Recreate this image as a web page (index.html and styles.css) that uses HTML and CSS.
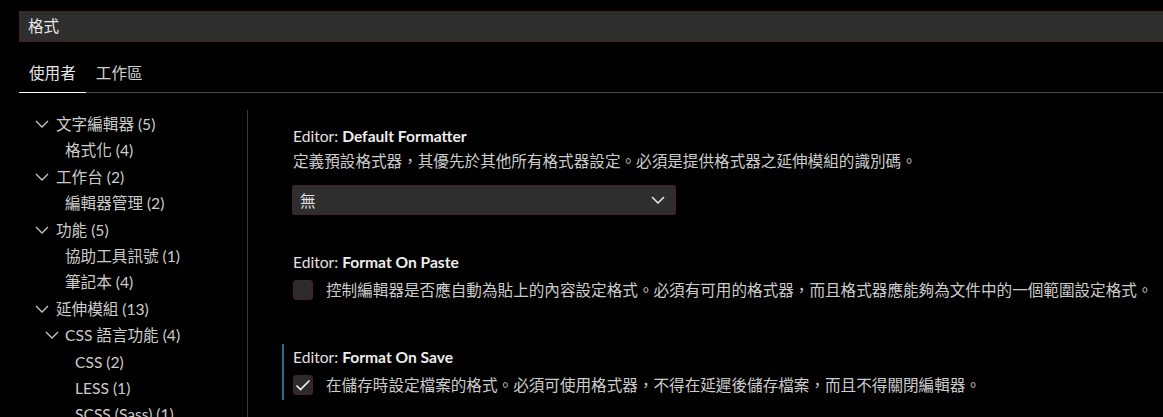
FILE: index.html
```html
<!DOCTYPE html>
<html lang="zh-Hant">
<head>
<meta charset="utf-8">
<link rel="stylesheet" href="styles.css">
</head>
<body>
<div class="page">
  <div class="header">
    <div class="search">格式</div>
    <div class="tabs">
      <div class="tab active">使用者</div>
      <div class="tab">工作區</div>
    </div>
  </div>
  <div class="body">
    <div class="tree">
      <div class="row l0"><svg class="chev" width="14" height="8" viewBox="0 0 14 8"><polyline points="1,1 7,7 13,1"/></svg>文字編輯器 (5)</div>
      <div class="row l1">格式化 (4)</div>
      <div class="row l0"><svg class="chev" width="14" height="8" viewBox="0 0 14 8"><polyline points="1,1 7,7 13,1"/></svg>工作台 (2)</div>
      <div class="row l1">編輯器管理 (2)</div>
      <div class="row l0"><svg class="chev" width="14" height="8" viewBox="0 0 14 8"><polyline points="1,1 7,7 13,1"/></svg>功能 (5)</div>
      <div class="row l1">協助工具訊號 (1)</div>
      <div class="row l1">筆記本 (4)</div>
      <div class="row l0"><svg class="chev" width="14" height="8" viewBox="0 0 14 8"><polyline points="1,1 7,7 13,1"/></svg>延伸模組 (13)</div>
      <div class="row l1p"><svg class="chev" width="14" height="8" viewBox="0 0 14 8"><polyline points="1,1 7,7 13,1"/></svg>CSS 語言功能 (4)</div>
      <div class="row l2">CSS (2)</div>
      <div class="row l2">LESS (1)</div>
      <div class="row l2">SCSS (Sass) (1)</div>
    </div>
    <div class="content">
      <div class="setting first">
        <div class="title">Editor: <b>Default Formatter</b></div>
        <div class="desc">定義預設格式器，其優先於其他所有格式器設定。必須是提供格式器之延伸模組的識別碼。</div>
        <div class="select"><span>無</span><svg class="selchev" width="14" height="8" viewBox="0 0 14 8"><polyline points="1,1 7,7 13,1"/></svg></div>
      </div>
      <div class="setting second">
        <div class="title">Editor: <b>Format On Paste</b></div>
        <div class="check-row"><span class="box"></span><span class="desc">控制編輯器是否應自動為貼上的內容設定格式。必須有可用的格式器，而且格式器應能夠為文件中的一個範圍設定格式。</span></div>
      </div>
      <div class="setting third focused">
        <div class="title">Editor: <b>Format On Save</b></div>
        <div class="check-row"><span class="box"><svg width="20" height="20" viewBox="0 0 20 20"><polyline points="3.5,10.5 7.5,14.5 16.5,5.5"/></svg></span><span class="desc">在儲存時設定檔案的格式。必須可使用格式器，不得在延遲後儲存檔案，而且不得關閉編輯器。</span></div>
      </div>
    </div>
  </div>
</div>
</body>
</html>
```

FILE: styles.css
```css
html, body {
  margin: 0;
  padding: 0;
  background: #000;
  overflow: hidden;
}
body {
  width: 1163px;
  height: 417px;
  font-family: "Segoe UI", Lato, "Noto Sans CJK TC", sans-serif;
  font-size: 15.6px;
  color: #cccccc;
}
.page {
  display: flex;
  flex-direction: column;
  height: 417px;
}
.header {
  padding: 11px 0 0 19px;
}
.search {
  box-sizing: border-box;
  height: 31px;
  margin-right: -30px;
  background: #2e2e2e;
  border: 1px solid #4f1f24;
  padding: 0 8px;
  line-height: 29px;
  color: #e6e6e6;
}
.tabs {
  display: flex;
  margin-top: 13px;
  border-bottom: 1px solid #4a4a4a;
  margin-right: -30px;
}
.tab {
  padding: 7px 10px 8px 10px;
  line-height: 22px;
  color: #d0d0d0;
}
.tab.active {
  color: #e8e8e8;
  box-shadow: inset 0 -1px 0 #ffffff;
  margin-bottom: -1px;
  padding-bottom: 9px;
}
.body {
  display: flex;
  margin-top: 17px;
  flex: 1;
}
.tree {
  width: 247px;
  flex: none;
  padding-top: 1px;
  border-right: 1px solid #3a3a3a;
}
.row {
  height: 26.4px;
  line-height: 26.4px;
  display: flex;
  align-items: center;
  white-space: nowrap;
  color: #cccccc;
}
.chev {
  flex: none;
  margin-right: 7px;
  fill: none;
  stroke: #c8c8c8;
  stroke-width: 1.3;
}
.l0 { padding-left: 35px; }
.l1 { padding-left: 65px; }
.l1p { padding-left: 45px; }
.l1p .chev { margin-right: 6px; }
.l2 { padding-left: 75px; }
.content {
  flex: 1;
  padding-top: 15px;
  padding-left: 34px;
}
.setting {
  border-left: 2px solid transparent;
  padding-left: 9px;
}
.setting.focused {
  border-left-color: #2f6b8c;
}
.title {
  line-height: 22px;
  color: #e2e2e2;
  white-space: nowrap;
}
.title b {
  font-weight: 700;
  color: #ededed;
}
.desc {
  line-height: 22px;
  color: #cccccc;
  white-space: nowrap;
}
.first .desc {
  margin-top: 3px;
}
.select {
  box-sizing: border-box;
  width: 384px;
  height: 30px;
  margin-top: 13px;
  margin-left: -1px;
  background: #2e2e2e;
  border: 1px solid #4a1f25;
  border-radius: 2px;
  display: flex;
  align-items: center;
  justify-content: space-between;
  padding: 0 10px 0 7px;
  color: #e0e0e0;
}
.selchev {
  fill: none;
  stroke: #e8e8e8;
  stroke-width: 1.5;
}
.second {
  margin-top: 36px;
}
.third {
  margin-top: 42px;
  padding-top: 2px;
  padding-bottom: 3px;
}
.check-row {
  display: flex;
  align-items: center;
  height: 24px;
  margin-top: 5px;
}
.box {
  box-sizing: border-box;
  width: 20px;
  height: 20px;
  flex: none;
  background: #2b2b2b;
  border: 1px solid #4a1f25;
  border-radius: 3px;
  margin-right: 13px;
  display: flex;
  align-items: center;
  justify-content: center;
}
.box svg {
  fill: none;
  stroke: #f0f0f0;
  stroke-width: 1.6;
  margin: -1px;
}
```
